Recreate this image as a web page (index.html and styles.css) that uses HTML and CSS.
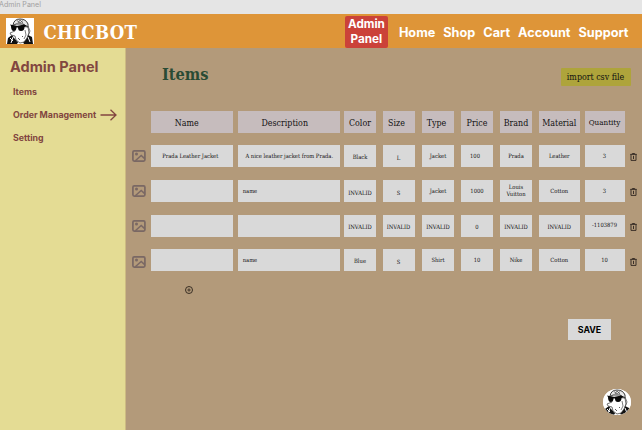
FILE: index.html
```html
<!DOCTYPE html>
<html lang="en">
<head>
<meta charset="utf-8">
<title>Chicbot Admin Panel</title>
<link rel="stylesheet" href="styles.css">
</head>
<body>
<svg width="0" height="0" class="defs">
  <symbol id="mascot" viewBox="0 0 28 26">
    <rect width="28" height="26" fill="#fff"/>
    <path d="M1 26 2 20 6 17 8 20 12 24 11 26ZM27 26 26 19 22 17 20 21 17 24 18 26Z" fill="#111"/>
    <path d="M7 19 5 25M22 19 24 24M4 20 7 23" stroke="#fff" stroke-width="1"/>
    <path d="M9 13 4 15 5 17 9 18 10 22 14 25 18 24 21 20 23 15 22 9 8 8Z" fill="#fff" stroke="#333" stroke-width=".7"/>
    <path d="M7 7Q8 1 14 1 20 1 22 6L22 9 17 6 10 6 6 8Z" fill="#e8e8e8" stroke="#222" stroke-width=".9"/>
    <path d="M11 2.5 14 5 17 2.5M12 5 14 2 17 5M22 8 24 13 22 18M19 12 20 17 18 21" fill="none" stroke="#444" stroke-width=".7"/>
    <path d="M4 6.5 11 8 18 6.5 21 8 18.5 9Q18.5 13 15 13 12 13 12 9.5L10.5 9.5Q10.5 13 7 13 5 12 5 8Z" fill="#080808"/>
    <path d="M12 20 14 22M16 18 17 19M10 23 12 25" stroke="#333" stroke-width=".8"/>
  </symbol>
  <symbol id="image" viewBox="0 0 14 12">
    <rect x=".9" y=".9" width="12" height="10.2" rx="1.3" fill="none" stroke="#7a6864" stroke-width="1.7"/>
    <circle cx="4.5" cy="4.1" r="1.5" fill="#7a6864"/>
    <path d="M3.3 10.8 9.2 5.4 12.7 8.6" fill="none" stroke="#7a6864" stroke-width="1.5"/>
  </symbol>
  <symbol id="trash" viewBox="0 0 7 8">
    <path d="M.2 1.4H6.8M2.3 1V.5H4.7V1M1 1.5V7.4H6V1.5M3.5 2.8V6" fill="none" stroke="#3b3028" stroke-width="1"/>
  </symbol>
</svg>
<div class="frame-label">Admin Panel</div>
<header class="header">
  <svg class="logo"><use href="#mascot"/></svg>
  <div class="brand">CHICBOT</div>
  <nav class="nav">
    <a class="active">Admin<br>Panel</a><a class="home">Home</a><a class="shop">Shop</a><a class="cart">Cart</a><a class="account">Account</a><a class="support">Support</a>
  </nav>
</header>
<div class="body">
  <aside class="sidebar">
    <h2>Admin Panel</h2>
    <a>Items</a>
    <a>Order Management <svg class="arrow" viewBox="0 0 17 12"><path d="M.5 6H16M10.5.8 16 6 10.5 11.2" fill="none" stroke="#824640" stroke-width="1.3"/></svg></a>
    <a>Setting</a>
  </aside>
  <main class="main">
    <div class="title-row"><h1>Items</h1><div class="import">import csv file</div></div>
    <div class="table">
      <div class="row head">
        <i class="pic"></i>
        <div class="c name"><span>Name</span></div><div class="c desc"><span>Description</span></div><div class="c color"><span>Color</span></div><div class="c size"><span>Size</span></div><div class="c type"><span>Type</span></div><div class="c price"><span>Price</span></div><div class="c label"><span>Brand</span></div><div class="c material"><span>Material</span></div><div class="c qty"><span>Quantity</span></div>
      </div>
      <div class="row">
        <svg class="pic"><use href="#image"/></svg>
        <div class="c name"><span>Prada Leather Jacket</span></div><div class="c desc"><span>A nice leather jacket from Prada.</span></div><div class="c color"><span class="low">Black</span></div><div class="c size"><span class="lower">L</span></div><div class="c type"><span>Jacket</span></div><div class="c price"><span class="left">100</span></div><div class="c label"><span>Prada</span></div><div class="c material"><span>Leather</span></div><div class="c qty"><span>3</span></div>
        <svg class="bin"><use href="#trash"/></svg>
      </div>
      <div class="row">
        <svg class="pic"><use href="#image"/></svg>
        <div class="c name"></div><div class="c desc start"><span>name</span></div><div class="c color"><span class="lower">INVALID</span></div><div class="c size"><span class="lower">S</span></div><div class="c type"><span>Jacket</span></div><div class="c price"><span>1000</span></div><div class="c label"><span>Louis<br>Vuitton</span></div><div class="c material"><span>Cotton</span></div><div class="c qty"><span>3</span></div>
        <svg class="bin"><use href="#trash"/></svg>
      </div>
      <div class="row">
        <svg class="pic"><use href="#image"/></svg>
        <div class="c name"></div><div class="c desc"></div><div class="c color"><span class="lower">INVALID</span></div><div class="c size"><span class="lower">INVALID</span></div><div class="c type"><span class="lower">INVALID</span></div><div class="c price"><span class="lower">0</span></div><div class="c label"><span class="lower">INVALID</span></div><div class="c material"><span class="lower">INVALID</span></div><div class="c qty"><span>-1103879</span></div>
        <svg class="bin"><use href="#trash"/></svg>
      </div>
      <div class="row">
        <svg class="pic down"><use href="#image"/></svg>
        <div class="c name"></div><div class="c desc start"><span>name</span></div><div class="c color"><span class="low">Blue</span></div><div class="c size"><span class="lower">S</span></div><div class="c type"><span>Shirt</span></div><div class="c price"><span>10</span></div><div class="c label"><span>Nike</span></div><div class="c material"><span>Cotton</span></div><div class="c qty"><span>10</span></div>
        <svg class="bin down"><use href="#trash"/></svg>
      </div>
    </div>
    <svg class="add" viewBox="0 0 8 8"><circle cx="4" cy="4" r="3.5" fill="none" stroke="#2d241c" stroke-width=".9"/><path d="M4 2.3V5.7M2.3 4H5.7" stroke="#2d241c" stroke-width=".8"/></svg>
    <div class="save">SAVE</div>
    <svg class="chat"><use href="#mascot"/></svg>
  </main>
</div>
</body>
</html>
```
FILE: styles.css
```css
* { box-sizing: border-box; }
body { margin: 0; width: 642px; height: 430px; overflow: hidden; background: #b39a7a; font-family: Inter, "Liberation Sans", sans-serif; }
.defs { position: absolute; }
.frame-label { height: 14px; background: #e5e5e5; color: #a0a0a0; font-size: 7.1px; line-height: 10px; text-indent: -1px; }
.header { height: 34px; background: #de9538; display: flex; align-items: center; }
.logo { width: 28px; height: 26px; margin-left: 6px; }
.brand { margin-left: 9.5px; width: 100px; color: #fff; font: bold 18.5px/30px "DejaVu Serif Condensed", "DejaVu Serif", serif; font-stretch: condensed; letter-spacing: .35px; padding-top: 4px; }
.nav { display: flex; align-items: center; margin-left: auto; margin-right: 13.5px; color: #fff; font-weight: 700; font-size: 12.7px; }
.nav a { margin-left: 8px; padding-top: 3px; white-space: nowrap; }
.nav a.active { margin: 2px 0 0; width: 43px; height: 32px; padding: 1px 0; border-radius: 2px; background: #cb4239; font-size: 11.7px; line-height: 15px; text-align: center; }
.nav a.home { margin-left: 11px; }
.body { display: flex; height: 382px; }
.sidebar { width: 126px; border-right: 1px solid #cdbb82; background: #e4dc94; color: #824640; }
.sidebar h2 { margin: 9px 0 0 10px; font-size: 14.5px; line-height: 20px; font-weight: 700; white-space: nowrap; }
.sidebar a { display: flex; align-items: center; height: 23px; margin-left: 13px; font-size: 8.8px; font-weight: 700; white-space: nowrap; }
.sidebar h2 + a { margin-top: 3px; }
.arrow { width: 17px; height: 12px; margin-left: 4px; }
.main { flex: 1; }
.title-row { display: flex; justify-content: space-between; height: 62.5px; padding: 15px 11px 0 36px; }
h1 { margin: 1px 0 0; color: #294b34; font: bold 16.2px/22px "DejaVu Serif Condensed", "DejaVu Serif", serif; font-stretch: condensed; }
.import { width: 70px; height: 18px; margin-top: 5px; padding-right: 1px; border-radius: 1px; background: #aea43b; color: #111; font: 8.8px/19px "DejaVu Serif Condensed", "DejaVu Serif", serif; font-stretch: condensed; text-align: center; white-space: nowrap; }
.table { height: 161px; font-family: "DejaVu Serif Condensed", "DejaVu Serif", serif; font-stretch: condensed; color: #111; }
.row { display: flex; align-items: center; height: 22px; margin-bottom: 12.7px; font-size: 5.8px; line-height: 6.5px; }
.pic { width: 14px; height: 12px; margin: 0 5px 0 6px; flex: none; }
.c { display: flex; align-items: center; justify-content: center; height: 22px; width: 32px; flex: none; background: #d9d9d9; white-space: nowrap; text-align: center; }
.head { font-size: 8.8px; line-height: 12px; }
.head .c { background: #c6bcbd; padding-top: 2px; }
.c.name { width: 81.5px; }
.c.desc { width: 101.5px; margin-left: 5.5px; }
.c.color { margin-left: 4.5px; }
.c.size { margin-left: 6.5px; }
.c.type { margin-left: 7.5px; }
.c.price, .c.label, .c.material { margin-left: 7px; }
.c.material { width: 40.5px; }
.c.qty { width: 40px; margin-left: 5.5px; }
.name span { margin-right: 3px; }
.desc span { margin-left: 1px; }
.start { justify-content: flex-start; }
.start span { margin-left: 4.7px; }
.head .name span { margin-right: 10px; }
.head .desc span { margin: 0 8px 0 0; }
.head .size span { margin-right: 4px; }
.head .type span { margin-right: 3px; }
.head .qty span { font-size: 8px; }
.qty span { margin-right: 1px; }
.left { margin-right: 4px; }
.low { margin-top: 2px; }
.lower { margin-top: 4px; }
.bin { width: 7px; height: 8px; margin-left: 5px; margin-top: 2px; flex: none; }
.pic.down { margin-top: 4px; }
.bin.down { margin-top: 4px; }
.add { display: block; width: 8px; height: 8px; margin: 14.5px 0 0 59px; }
.save { width: 43px; height: 21px; margin: 25px 0 0 442px; background: #d9d9d9; color: #000; font-size: 8.8px; line-height: 21px; font-weight: 700; text-align: center; }
.chat { display: block; width: 28px; height: 26px; margin: 49px 0 0 477px; border-radius: 50%; background: #fff; }
```
